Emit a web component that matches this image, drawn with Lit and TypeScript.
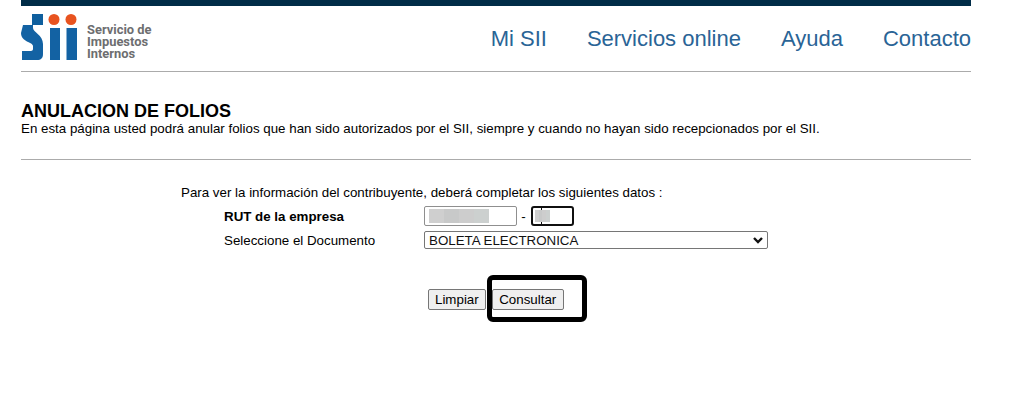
import { LitElement, css, html } from 'lit';
import { customElement } from 'lit/decorators.js';

@customElement('app-root')
export class AppRoot extends LitElement {
    static styles = css`
        :host {
            display: block;
            height: 401px;
            background: #fff;
            font-family: "Liberation Sans", Arial, sans-serif;
            color: #000;
            overflow: hidden;
        }

        .page {
            width: 950px;
            margin-left: 21px;
        }

        .topbar {
            height: 6px;
            background: #002c47;
        }

        .header {
            height: 65px;
            border-bottom: 1px solid #ababab;
            display: flex;
            justify-content: space-between;
        }

        .logo {
            display: flex;
            align-items: flex-start;
            padding-top: 8px;
        }

        .logo svg {
            display: block;
        }

        .logo-text {
            margin: 10px 0 0 10px;
            font-family: Roboto, "Liberation Sans", sans-serif;
            font-size: 12.9px;
            line-height: 12px;
            font-weight: 700;
            color: #6d6e70;
        }

        nav {
            display: flex;
            gap: 40px;
            padding-top: 20px;
            font-size: 22px;
            line-height: 26px;
            color: #2a6496;
        }

        .intro {
            height: 88px;
            border-bottom: 1px solid #ababab;
            padding-top: 29px;
            box-sizing: border-box;
        }

        h1 {
            margin: 0;
            font-size: 18px;
            line-height: 21px;
            font-weight: 700;
        }

        .intro p {
            margin: 0;
            font-size: 13.33px;
            line-height: 14px;
        }

        .form {
            padding: 26px 0 0 160px;
            font-size: 13.33px;
        }

        .lead {
            line-height: 14px;
            margin-bottom: 6px;
        }

        .grid {
            display: grid;
            grid-template-columns: 200px 344px;
            row-gap: 5px;
            margin-left: 43px;
            align-items: center;
        }

        .rut {
            display: flex;
            align-items: center;
            height: 20px;
        }

        .field {
            height: 20px;
            box-sizing: border-box;
            border: 1px solid #8f8f8f;
            border-radius: 2px;
            display: flex;
            align-items: center;
            padding-left: 4px;
        }

        .field.num {
            width: 93px;
        }

        .field.dv {
            width: 43px;
            margin-left: 1px;
            border: 2px solid #101010;
            border-radius: 3px;
            padding-left: 2px;
            position: relative;
            z-index: 0;
        }

        /* text caret showing above and below the blurred digit */
        .field.dv::before {
            content: "";
            position: absolute;
            left: 8px;
            top: 0;
            width: 1px;
            height: 16px;
            background: #111;
            z-index: -1;
        }

        .blur {
            height: 14px;
            background: linear-gradient(90deg, #cfcfcf 0 25%, #c8c9c9 25% 50%, #cdcdcd 50% 75%, #ccd0cf 75%);
        }

        .field.num .blur {
            width: 60px;
        }

        .field.dv .blur {
            width: 15px;
            height: 12px;
        }

        .dash {
            width: 13px;
            text-align: center;
        }

        .select {
            height: 18px;
            box-sizing: border-box;
            border: 1px solid #767676;
            border-radius: 2px;
            display: flex;
            align-items: center;
            justify-content: space-between;
            padding: 0 4px;
            color: #111;
        }

        .buttons {
            display: flex;
            gap: 6px;
            margin: 40px 0 0 247px;
            position: relative;
        }

        button {
            height: 21px;
            padding: 0 6px;
            font-family: "Liberation Sans", Arial, sans-serif;
            font-size: 13.33px;
            color: #000;
            background: #efefef;
            border: 1px solid #767676;
            border-radius: 2px;
        }

        button.consultar {
            padding: 0 6.5px;
        }

        .mark {
            position: absolute;
            left: 59px;
            top: -14px;
            width: 100px;
            height: 47px;
            box-sizing: border-box;
            border: 5px solid #000;
            border-radius: 6px;
        }
    `;

    render() {
        return html`
            <div class="page">
                <div class="topbar"></div>
                <header class="header">
                    <div class="logo">
                        <svg width="56" height="47" viewBox="0 0 56 47">
                            <rect x="11" y="0" width="11" height="11" fill="#0f5f9e"/>
                            <path d="M2 11H12V14C12 18 22 21 22 30V40C22 44 20 46 16 46H1V37H10C11 37 12 36 12 35V32C12 28 0 28 0 19Z" fill="#1362a3"/>
                            <circle cx="33" cy="5.5" r="5.5" fill="#e8531f"/>
                            <circle cx="50" cy="5.5" r="5.5" fill="#e8531f"/>
                            <rect x="29" y="14" width="10" height="32" fill="#1362a3"/>
                            <rect x="45.5" y="14" width="10.5" height="32" fill="#1362a3"/>
                        </svg>
                        <div class="logo-text">Servicio de<br>Impuestos<br>Internos</div>
                    </div>
                    <nav>
                        <span>Mi SII</span>
                        <span>Servicios online</span>
                        <span>Ayuda</span>
                        <span>Contacto</span>
                    </nav>
                </header>
                <section class="intro">
                    <h1>ANULACION DE FOLIOS</h1>
                    <p>En esta página usted podrá anular folios que han sido autorizados por el SII, siempre y cuando no hayan sido recepcionados por el SII.</p>
                </section>
                <section class="form">
                    <div class="lead">Para ver la información del contribuyente, deberá completar los siguientes datos :</div>
                    <div class="grid">
                        <b>RUT de la empresa</b>
                        <div class="rut">
                            <div class="field num"><div class="blur"></div></div>
                            <span class="dash">-</span>
                            <div class="field dv"><div class="blur"></div></div>
                        </div>
                        <span>Seleccione el Documento</span>
                        <div class="select">
                            <span>BOLETA ELECTRONICA</span>
                            <svg width="10" height="7" viewBox="0 0 10 7">
                                <path d="M1 1L5 5L9 1" fill="none" stroke="#111" stroke-width="2.4"/>
                            </svg>
                        </div>
                    </div>
                    <div class="buttons">
                        <button>Limpiar</button>
                        <button class="consultar">Consultar</button>
                        <div class="mark"></div>
                    </div>
                </section>
            </div>
        `;
    }
}
